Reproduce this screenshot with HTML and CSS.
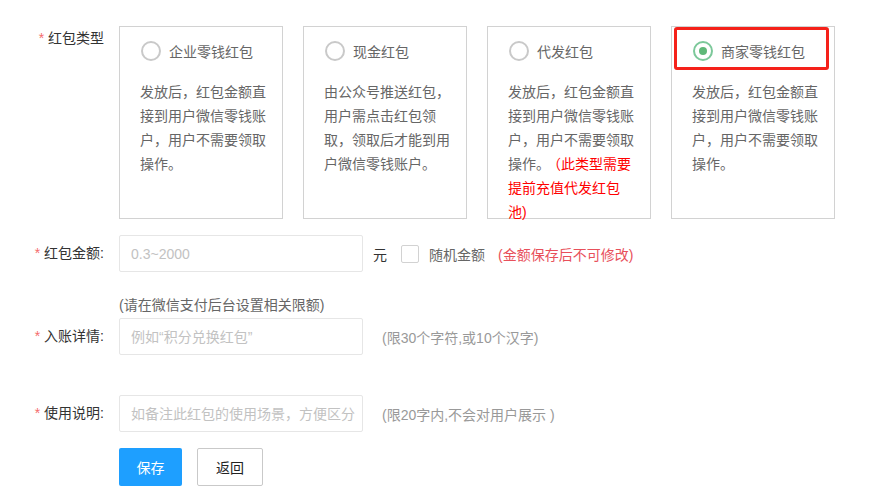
FILE: index.html
```html
<!DOCTYPE html>
<html lang="zh-CN">
<head>
    <meta charset="UTF-8">
    <meta name="viewport" content="width=device-width, initial-scale=1.0">
    <title>红包设置</title>
    <link rel="stylesheet" href="styles.css">
</head>
<body>
    <form class="hb-form">
        <!-- 红包类型 -->
        <div class="form-row">
            <label class="form-label label-top"><span class="req">*</span> 红包类型</label>
            <div class="type-list">
                <div class="type-card">
                    <div class="type-head"><span class="radio"></span>企业零钱红包</div>
                    <p class="type-desc">发放后，红包金额直接到用户微信零钱账户，用户不需要领取操作。</p>
                </div>
                <div class="type-card">
                    <div class="type-head"><span class="radio"></span>现金红包</div>
                    <p class="type-desc">由公众号推送红包，用户需点击红包领取，领取后才能到用户微信零钱账户。</p>
                </div>
                <div class="type-card">
                    <div class="type-head"><span class="radio"></span>代发红包</div>
                    <p class="type-desc">发放后，红包金额直接到用户微信零钱账户，用户不需要领取操作。<span class="warn">（此类型需要提前充值代发红包池)</span></p>
                </div>
                <div class="type-card">
                    <div class="type-head"><span class="radio checked"></span>商家零钱红包</div>
                    <p class="type-desc">发放后，红包金额直接到用户微信零钱账户，用户不需要领取操作。</p>
                    <div class="mark-box"></div>
                </div>
            </div>
        </div>

        <!-- 红包金额 -->
        <div class="form-row row-amount">
            <label class="form-label"><span class="req">*</span> 红包金额:</label>
            <div class="field">
                <div class="inline">
                    <input class="text-input" type="text" placeholder="0.3~2000">
                    <span class="unit">元</span>
                    <span class="checkbox"></span>
                    <span class="check-text">随机金额</span>
                    <span class="warn-tip">(金额保存后不可修改)</span>
                </div>
                <div class="below-tip">(请在微信支付后台设置相关限额)</div>
            </div>
        </div>

        <!-- 入账详情 -->
        <div class="form-row row-detail">
            <label class="form-label"><span class="req">*</span> 入账详情:</label>
            <div class="inline">
                <input class="text-input" type="text" placeholder="例如“积分兑换红包”">
                <span class="aux">(限30个字符,或10个汉字)</span>
            </div>
        </div>

        <!-- 使用说明 -->
        <div class="form-row row-remark">
            <label class="form-label"><span class="req">*</span> 使用说明:</label>
            <div class="inline">
                <input class="text-input tight" type="text" placeholder="如备注此红包的使用场景，方便区分">
                <span class="aux">(限20字内,不会对用户展示 )</span>
            </div>
        </div>

        <div class="form-row row-btns">
            <div class="btns">
                <button type="button" class="btn btn-primary">保存</button>
                <button type="button" class="btn btn-default">返回</button>
            </div>
        </div>
    </form>
</body>
</html>
```

FILE: styles.css
```css
/* General */
body {
    margin: 0;
    padding: 26px 0 0;
    background: #fff;
    color: #333;
    font-family: "Liberation Sans", "Noto Sans CJK SC", sans-serif;
    font-size: 14px;
}

.hb-form {
    width: 878px;
}

.form-row {
    display: flex;
    align-items: flex-start;
}

.form-label {
    width: 104px;
    margin-right: 15px;
    text-align: right;
    line-height: 37px;
    color: #333;
    white-space: nowrap;
}

.form-label.label-top {
    line-height: 24px;
}

.req {
    color: #f56c6c;
}

/* Tipos de sobre */
.type-list {
    display: flex;
    gap: 20px;
}

.type-card {
    position: relative;
    width: 164px;
    height: 193px;
    box-sizing: border-box;
    border: 1px solid #d2d2d2;
    padding: 14px 12px 0 20px;
}

.type-head {
    display: flex;
    align-items: center;
    height: 20px;
    padding-left: 1px;
    color: #666;
    white-space: nowrap;
}

.radio {
    width: 20px;
    height: 20px;
    box-sizing: border-box;
    border: 2px solid #c9c9c9;
    border-radius: 50%;
    margin-right: 8px;
    position: relative;
}

.radio.checked {
    border: 2px solid #7cc89a;
}

.radio.checked::after {
    content: "";
    position: absolute;
    left: 4px;
    top: 4px;
    width: 8px;
    height: 8px;
    border-radius: 50%;
    background: #5fb878;
}

.type-desc {
    margin: 19px 0 0;
    line-height: 24px;
    color: #666;
}

.warn {
    margin-left: 4px;
    color: #ff0000;
}

.mark-box {
    position: absolute;
    left: 2px;
    top: 0;
    width: 155px;
    height: 43px;
    box-sizing: border-box;
    border: 3px solid #f5211a;
    border-radius: 3px;
}

/* Campos */
.row-amount {
    margin-top: 16px;
}

.row-detail {
    margin-top: 3px;
}

.row-remark {
    margin-top: 40px;
}

.row-btns {
    margin-top: 16px;
    padding-left: 119px;
}

.inline {
    display: flex;
    align-items: center;
    height: 37px;
}

.text-input {
    width: 244px;
    height: 37px;
    box-sizing: border-box;
    border: 1px solid #e6e6e6;
    border-radius: 2px;
    padding: 0 10px 0 11px;
    font-family: inherit;
    font-size: 14px;
    color: #333;
    outline: none;
}

.text-input.tight {
    padding-right: 4px;
}

.text-input::placeholder {
    color: #c2c2c2;
}

.unit {
    margin-left: 10px;
    color: #333;
}

.checkbox {
    width: 18px;
    height: 18px;
    box-sizing: border-box;
    border: 1px solid #d2d2d2;
    border-radius: 2px;
    margin-left: 14px;
}

.check-text {
    margin-left: 10px;
    color: #666;
}

.warn-tip {
    margin-left: 13px;
    color: #e8505b;
}

.below-tip {
    margin-top: 23px;
    line-height: 20px;
    color: #666;
}

.aux {
    margin-left: 19px;
    color: #999;
}

/* Botones */
.btns {
    display: flex;
    gap: 15px;
}

.btn {
    height: 38px;
    box-sizing: border-box;
    border-radius: 2px;
    font-family: inherit;
    font-size: 14px;
    cursor: pointer;
}

.btn-primary {
    width: 63px;
    border: none;
    background: #1e9fff;
    color: #fff;
}

.btn-default {
    width: 66px;
    border: 1px solid #c9c9c9;
    background: #fff;
    color: #222;
}
```
